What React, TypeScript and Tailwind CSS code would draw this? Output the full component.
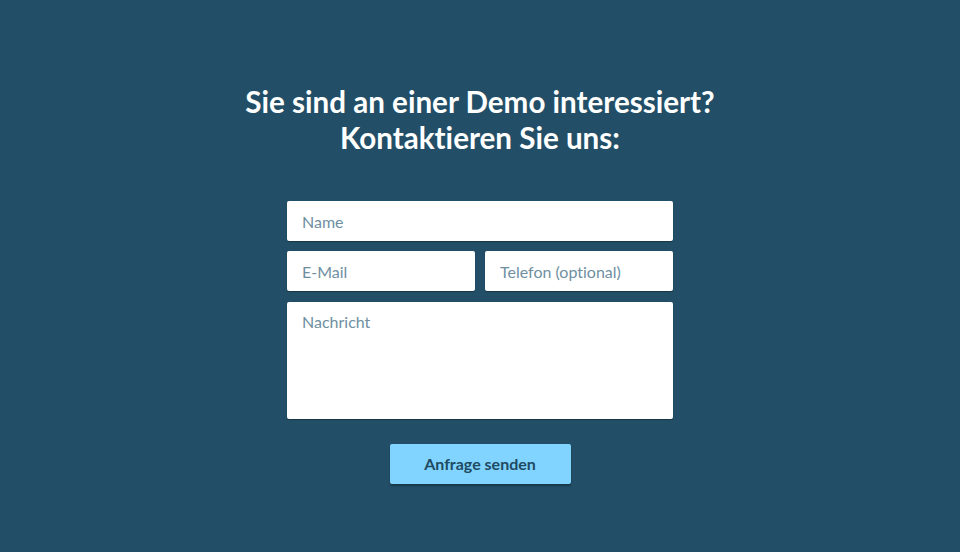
export default function App() {
  return (
    <div className="min-h-[552px] w-full bg-[#224f67] flex flex-col items-center font-['Lato','Noto_Sans',sans-serif] [font-variant-ligatures:none]">
      <h1 className="mt-[84px] text-center text-white font-bold text-[29.6px] leading-[36px]">
        Sie sind an einer Demo interessiert?
        <br />
        Kontaktieren Sie uns:
      </h1>

      <form className="mt-[45px] w-[386px] flex flex-col gap-[10px]" onSubmit={(e) => e.preventDefault()}>
        <input
          type="text"
          placeholder="Name"
          className="h-10 w-full rounded-[2px] bg-white px-[15px] text-[16px] text-[#224f67] placeholder:text-[#6f8fa1] shadow-[0_1px_1px_rgba(0,0,0,0.35)] outline-none"
        />
        <div className="grid grid-cols-2 gap-[10px]">
          <input
            type="email"
            placeholder="E-Mail"
            className="h-10 w-full rounded-[2px] bg-white px-[15px] text-[16px] text-[#224f67] placeholder:text-[#6f8fa1] shadow-[0_1px_1px_rgba(0,0,0,0.35)] outline-none"
          />
          <input
            type="tel"
            placeholder="Telefon (optional)"
            className="h-10 w-full rounded-[2px] bg-white px-[15px] text-[16px] text-[#224f67] placeholder:text-[#6f8fa1] shadow-[0_1px_1px_rgba(0,0,0,0.35)] outline-none"
          />
        </div>
        <textarea
          placeholder="Nachricht"
          className="mt-px h-[117px] w-full resize-none rounded-[2px] bg-white px-[15px] py-[9px] text-[16px] leading-[22px] text-[#224f67] placeholder:text-[#6f8fa1] shadow-[0_1px_1px_rgba(0,0,0,0.35)] outline-none"
        />
        <div className="mt-[15px] flex justify-center">
          <button
            type="submit"
            className="h-10 w-[181px] rounded-[2px] bg-[#80d4ff] text-[16px] font-bold text-[#1f4a63] shadow-[0_2px_2px_rgba(0,0,0,0.3)]"
          >
            Anfrage senden
          </button>
        </div>
      </form>
    </div>
  )
}
